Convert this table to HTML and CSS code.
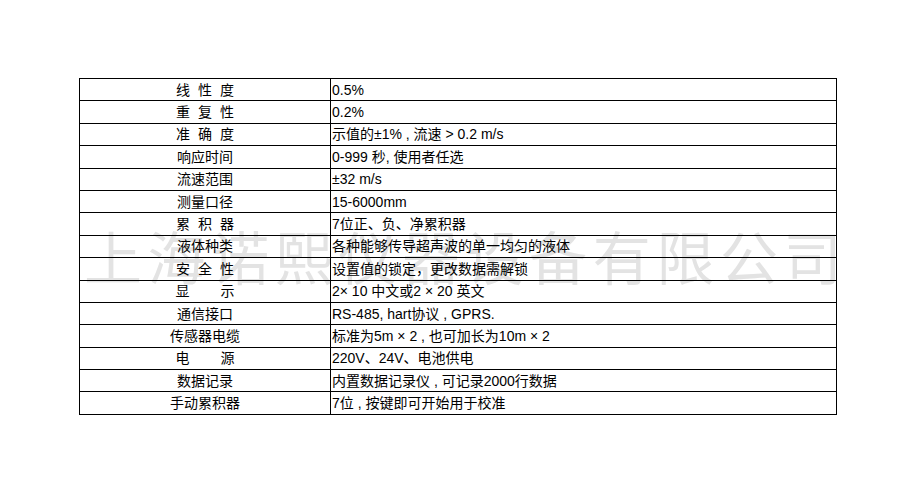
FILE: index.html
```html
<!DOCTYPE html>
<html lang="zh-CN">
<head>
<meta charset="utf-8">
<title>参数表</title>
<link rel="stylesheet" href="styles.css">
</head>
<body>
<div class="page">
  <table class="spec">
    <tbody>
      <tr><td class="k"><span class="sp">线性度</span></td><td class="v">0.5%</td></tr>
      <tr><td class="k"><span class="sp">重复性</span></td><td class="v">0.2%</td></tr>
      <tr><td class="k"><span class="sp">准确度</span></td><td class="v">示值的±1% , 流速 &gt; 0.2 m/s</td></tr>
      <tr><td class="k">响应时间</td><td class="v">0-999 秒, 使用者任选</td></tr>
      <tr><td class="k">流速范围</td><td class="v">±32 m/s</td></tr>
      <tr><td class="k">测量口径</td><td class="v">15-6000mm</td></tr>
      <tr><td class="k"><span class="sp">累积器</span></td><td class="v">7位正、负、净累积器</td></tr>
      <tr><td class="k">液体种类</td><td class="v">各种能够传导超声波的单一均匀的液体</td></tr>
      <tr><td class="k"><span class="sp">安全性</span></td><td class="v">设置值的锁定，更改数据需解锁</td></tr>
      <tr><td class="k"><span class="wide">显示</span></td><td class="v">2× 10 中文或2 × 20 英文</td></tr>
      <tr><td class="k">通信接口</td><td class="v">RS-485, hart协议 , GPRS.</td></tr>
      <tr><td class="k">传感器电缆</td><td class="v">标准为5m × 2 , 也可加长为10m × 2</td></tr>
      <tr><td class="k"><span class="wide">电源</span></td><td class="v">220V、24V、电池供电</td></tr>
      <tr><td class="k">数据记录</td><td class="v">内置数据记录仪 , 可记录2000行数据</td></tr>
      <tr><td class="k">手动累积器</td><td class="v">7位 , 按键即可开始用于校准</td></tr>
    </tbody>
  </table>
  <div class="watermark">上海诺熙仪器设备有限公司</div>
</div>
</body>
</html>
```

FILE: styles.css
```css
html, body {
  margin: 0;
  padding: 0;
  background: #ffffff;
}

.page {
  position: relative;
  width: 920px;
  height: 493px;
  padding-top: 78px;
  padding-left: 79px;
  box-sizing: border-box;
  font-family: "Liberation Sans", "Noto Sans CJK SC", sans-serif;
  color: #000000;
}

.spec {
  position: relative;
  z-index: 1;
  border-collapse: collapse;
  width: 758px;
  table-layout: fixed;
}

.spec td {
  border: 1px solid #000000;
  height: 21.4px;
  padding: 0;
  font-size: 14px;
  line-height: 16px;
  white-space: nowrap;
  overflow: hidden;
}

.spec td.k {
  width: 250px;
  text-align: center;
}

.spec td.v {
  text-align: left;
  padding-left: 1px;
}

.sp {
  letter-spacing: 8px;
  margin-right: -8px;
}

.wide {
  letter-spacing: 31px;
  margin-right: -31px;
}

.watermark {
  position: absolute;
  z-index: 0;
  left: 84px;
  top: 222px;
  font-family: "Noto Sans CJK SC", sans-serif;
  font-size: 58px;
  line-height: 66px;
  letter-spacing: 5.6px;
  color: #e3e3e3;
  white-space: nowrap;
}
```
